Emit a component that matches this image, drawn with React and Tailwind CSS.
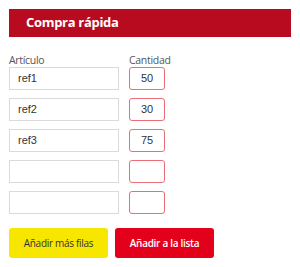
import React from 'react';

const rows = [
  { ref: 'ref1', qty: '50' },
  { ref: 'ref2', qty: '30' },
  { ref: 'ref3', qty: '75' },
  { ref: '', qty: '' },
  { ref: '', qty: '' },
];

export default function App() {
  return (
    <div className="w-[300px] h-[267px] bg-white pt-[9px] px-[9px] font-['Open_Sans',sans-serif]">
      {/* Header */}
      <div className="w-[282px] h-[28px] bg-[#b80b1f] flex items-center pl-[17px]">
        <span className="text-white text-[13px] font-bold tracking-[-0.3px]">Compra rápida</span>
      </div>

      {/* Labels */}
      <div className="flex gap-[10px] mt-[16px] text-[10.5px] leading-[14px] text-[#555] tracking-[-0.3px]">
        <span className="w-[110px]">Artículo</span>
        <span>Cantidad</span>
      </div>

      {/* Rows */}
      <div className="flex flex-col gap-[8px]">
        {rows.map((row, idx) => (
          <div key={idx} className="flex gap-[10px]">
            <div className="w-[110px] h-[23px] border border-[#dadada] flex items-center pl-[8px] text-[11px] text-[#333] font-['Liberation_Sans',sans-serif]">
              {row.ref}
            </div>
            <div className="w-[36px] h-[23px] border border-[#ea6d78] rounded-[3px] flex items-center justify-center text-[11px] text-[#333] font-['Liberation_Sans',sans-serif]">
              {row.qty}
            </div>
          </div>
        ))}
      </div>

      {/* Buttons */}
      <div className="flex gap-[7px] mt-[14px]">
        <button className="w-[99px] h-[30px] bg-[#f7e600] rounded-[3px] text-[10px] text-[#333] tracking-[-0.3px]">
          Añadir más filas
        </button>
        <button className="w-[99px] h-[30px] bg-[#e2001a] rounded-[3px] text-[10px] text-white font-semibold tracking-[-0.3px]">
          Añadir a la lista
        </button>
      </div>
    </div>
  );
}
